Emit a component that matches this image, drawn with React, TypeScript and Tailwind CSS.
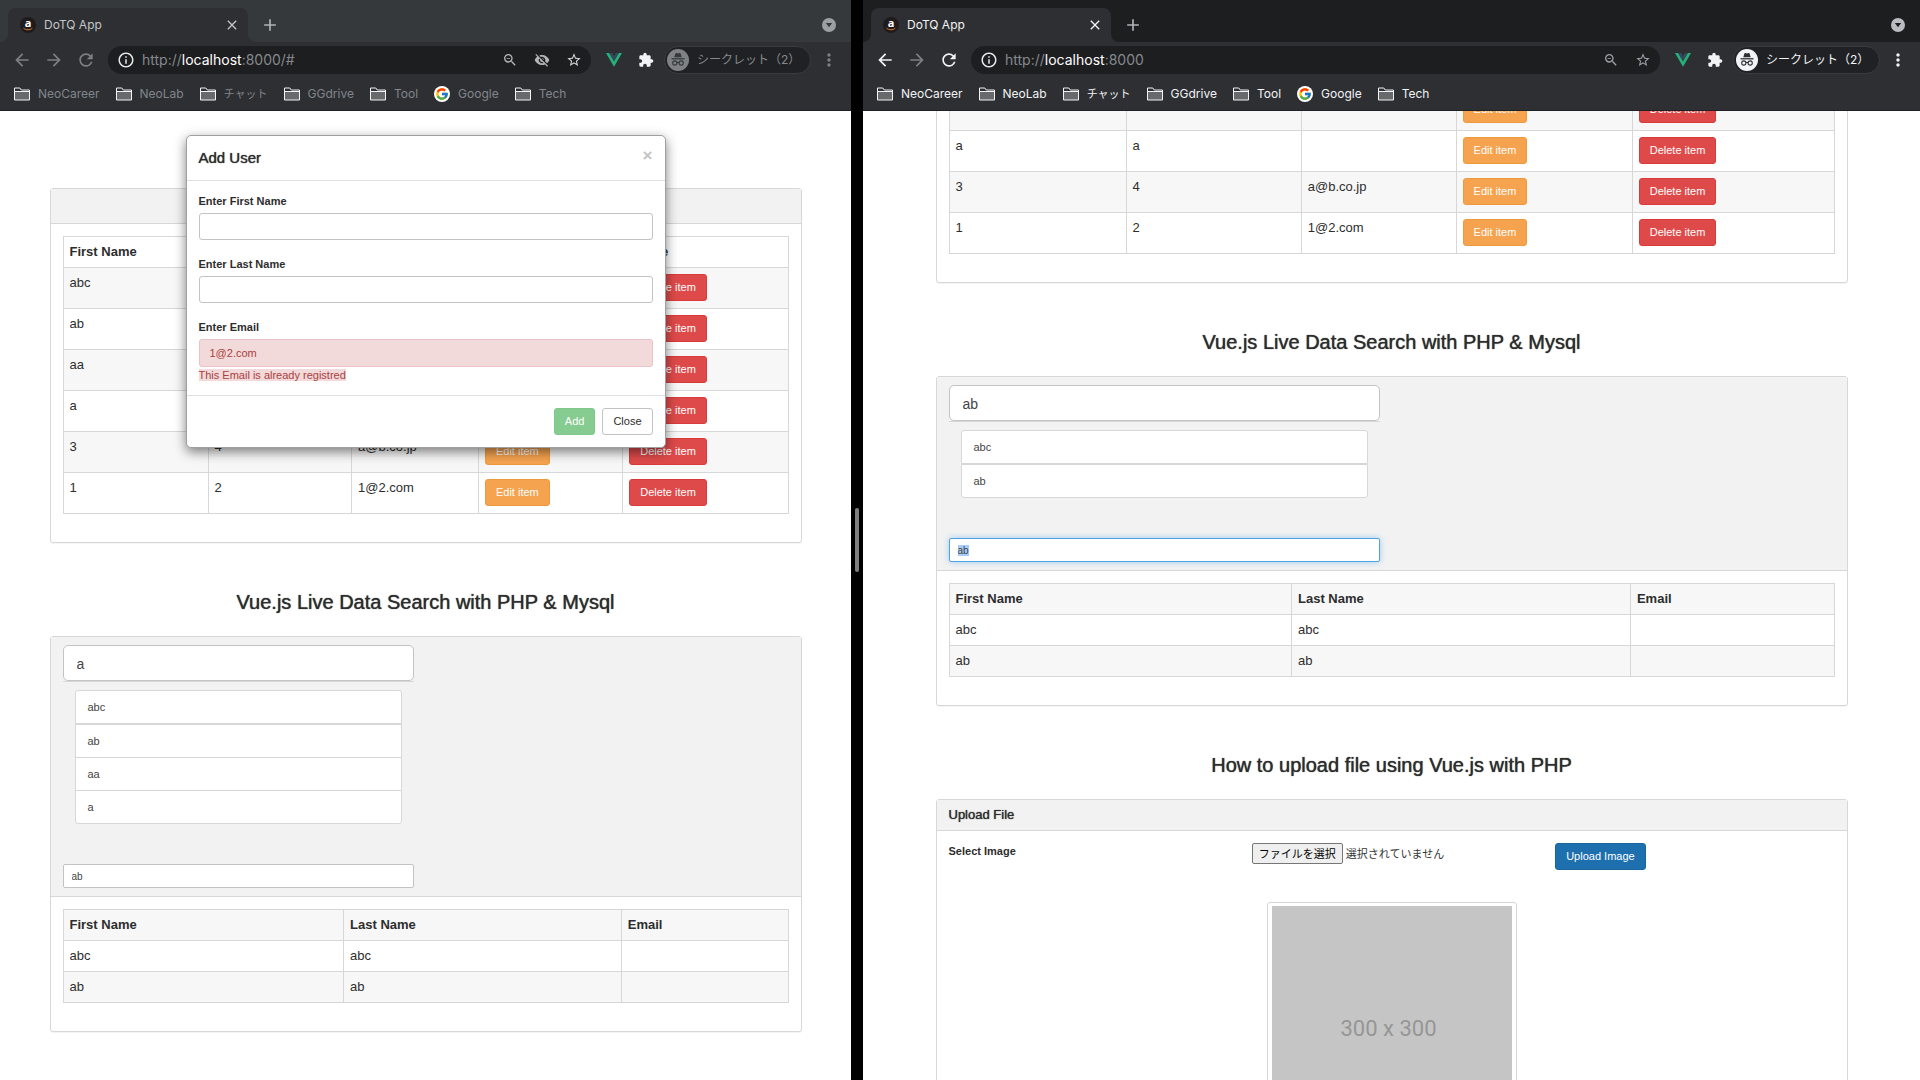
import { useLayoutEffect, useRef } from "react";
import type { ReactNode } from "react";
import {
  MdAdd,
  MdArrowBack,
  MdArrowForward,
  MdClose,
  MdExtension,
  MdInfoOutline,
  MdMoreVert,
  MdRefresh,
  MdStarBorder,
  MdVisibilityOff,
  MdZoomOut,
} from "react-icons/md";
import { FcGoogle } from "react-icons/fc";

type User = { first: string; last: string; email: string };

const users: User[] = [
  { first: "abc", last: "abc", email: "" },
  { first: "ab", last: "ab", email: "" },
  { first: "aa", last: "aa", email: "" },
  { first: "a", last: "a", email: "" },
  { first: "3", last: "4", email: "a@b.co.jp" },
  { first: "1", last: "2", email: "1@2.com" },
];

const searchResults = users.slice(0, 2);

/* ---------- Icons ---------- */

function Favicon() {
  return (
    <svg viewBox="0 0 16 16" className="size-4 shrink-0" aria-hidden="true">
      <circle cx="8" cy="8" r="8" fill="#1f1b1c" />
      <text x="8" y="10" textAnchor="middle" fontSize="11" fontWeight="700" fontFamily="Open Sans, sans-serif" fill="#fff">
        a
      </text>
      <path d="M3.8 11.4c2.4 1.9 5.900 1.900 8.200.1" fill="none" stroke="#d9792b" strokeWidth="1" strokeLinecap="round" />
    </svg>
  );
}

function FolderIcon() {
  return (
    <svg viewBox="0 0 16 14" className="h-[14px] w-4 shrink-0" aria-hidden="true">
      <path d="M1 4.500h14V13H1z" fill="#68696b" />
      <path d="M.5 13V1h5.300l1.500 2H15.500v10z" fill="none" stroke="#f1f3f4" />
      <path d="M.5 4.500h15" stroke="#f1f3f4" />
    </svg>
  );
}

function VueIcon() {
  return (
    <svg viewBox="0 0 16 14" className="h-[14px] w-4" aria-hidden="true">
      <path d="M0 0h3.200L8 8.300 12.800 0H16L8 13.800z" fill="#26b17b" />
      <path d="M3.200 0h2.900L8 3.300 9.900 0h2.900L8 8.300z" fill="#34495e" />
    </svg>
  );
}

function IncognitoIcon({ active }: { active: boolean }) {
  const ink = active ? "#2e2f33" : "#35383b";
  return (
    <svg viewBox="0 0 22 22" className="size-[22px] shrink-0" aria-hidden="true">
      <circle cx="11" cy="11" r="11" fill={active ? "#f1f3f4" : "#7f8285"} />
      <path d="M7.300 8.300 8.400 4.600c.2-.6.700-.7 1.200-.5l1.400.4 1.400-.4c.5-.2 1 0 1.200.5l1.100 3.700z" fill={ink} />
      <path d="M4.500 9.800h13" stroke={ink} strokeWidth="1.300" />
      <circle cx="7.800" cy="14" r="2.100" fill="none" stroke={ink} strokeWidth="1.100" />
      <circle cx="14.200" cy="14" r="2.100" fill="none" stroke={ink} strokeWidth="1.100" />
      <path d="M9.900 13.700c.7-.5 1.500-.5 2.200 0" fill="none" stroke={ink} strokeWidth="1.100" />
    </svg>
  );
}

function TabSearchIcon({ active }: { active: boolean }) {
  return (
    <svg viewBox="0 0 14 14" className="size-[14px]" aria-hidden="true">
      <circle cx="7" cy="7" r="7" fill={active ? "#b9bdc2" : "#9da0a3"} />
      <path d="M3.800 5h6.400L7 9.300z" fill={active ? "#1d1e20" : "#35393c"} />
    </svg>
  );
}

function TabFlare({ side }: { side: "left" | "right" }) {
  return (
    <svg
      viewBox="0 0 8 8"
      className={side === "left" ? "absolute bottom-0 right-full size-2" : "absolute bottom-0 left-full size-2"}
      aria-hidden="true"
    >
      <path d={side === "left" ? "M8 0v8H0a8 8 0 0 0 8-8z" : "M0 0v8h8a8 8 0 0 1-8-8z"} fill="#2e2f33" />
    </svg>
  );
}

/* ---------- Browser frame ---------- */

function Bookmark({ icon, children }: { icon: ReactNode; children: ReactNode }) {
  return (
    <a href="#bookmark" className="flex items-center gap-2 whitespace-nowrap">
      {icon}
      {children}
    </a>
  );
}

type BrowserProps = { active: boolean; path: string; blockedCookies?: boolean; children: ReactNode };

function BrowserWindow({ active, path, blockedCookies, children }: BrowserProps) {
  const strip = active ? "bg-[#1d1e20]" : "bg-[#35393c]";
  const title = active ? "text-[#f1f3f4]" : "text-[#c3c5c7]";
  const tool = active ? "text-[#f1f3f4]" : "text-[#7d8083]";
  const mark = active ? "text-[#f1f3f4]" : "text-[#80868b]";
  const hint = active ? "text-[#9aa0a6]" : "text-[#b4b6b8]";

  return (
    <section className="flex h-full min-w-0 flex-col overflow-hidden bg-white">
      <header className="shrink-0 border-b border-[#1f2023] bg-[#2e2f33] font-[Inter,'Noto_Sans_CJK_JP',sans-serif]">
        <div className={`flex h-[42px] items-end justify-between pl-2 pr-[15px] ${strip}`}>
          <div className="flex items-center">
            <div className={`relative flex h-[34px] w-60 items-center rounded-t-lg bg-[#2e2f33] pl-3 pr-2 text-xs ${title}`}>
              <TabFlare side="left" />
              <Favicon />
              <span className="ml-2 flex-1">DoTQ App</span>
              <button type="button" aria-label="Close tab">
                <MdClose className="size-4" />
              </button>
              <TabFlare side="right" />
            </div>
            <button type="button" aria-label="New tab" className="ml-3 text-[#b0b3b6]">
              <MdAdd className="size-5" />
            </button>
          </div>
          <button type="button" aria-label="Search tabs" className="mb-[10px]">
            <TabSearchIcon active={active} />
          </button>
        </div>

        <div className={`flex h-9 items-center pl-3 pr-3 ${tool}`}>
          <button type="button" aria-label="Back">
            <MdArrowBack className="size-5" />
          </button>
          <button type="button" aria-label="Forward" className="ml-3 text-[#7d8083]">
            <MdArrowForward className="size-5" />
          </button>
          <button type="button" aria-label="Reload" className="ml-3">
            <MdRefresh className="size-5" />
          </button>
          <div className="ml-3 flex h-7 min-w-0 flex-1 items-center rounded-full bg-[#1d1e20] px-[9px]">
            <MdInfoOutline className="size-[18px] shrink-0 text-[#e8eaed]" />
            <span className="ml-[7px] flex-1 truncate text-sm text-[#85898d]">
              http://<span className="text-white">localhost</span>
              {path}
            </span>
            <div className={`flex items-center gap-4 ${hint}`}>
              <button type="button" aria-label="Zoom out">
                <MdZoomOut className="size-4" />
              </button>
              {blockedCookies && (
                <button type="button" aria-label="Third-party cookies blocked">
                  <MdVisibilityOff className="size-4" />
                </button>
              )}
              <button type="button" aria-label="Bookmark this page" className={active ? "" : "text-[#d5d7d9]"}>
                <MdStarBorder className="size-4" />
              </button>
            </div>
          </div>
          <button type="button" aria-label="Vue devtools" className="ml-[15px]">
            <VueIcon />
          </button>
          <button type="button" aria-label="Extensions" className="ml-4 text-[#f1f3f4]">
            <MdExtension className="size-4" />
          </button>
          <button
            type="button"
            className={`ml-[10px] flex h-7 w-[147px] items-center gap-2 whitespace-nowrap rounded-full border border-[#3a3b3e] bg-[#202124] pl-[2px] text-xs ${active ? "text-[#f1f3f4]" : "text-[#85898d]"}`}
          >
            <IncognitoIcon active={active} />
            シークレット（2）
          </button>
          <button type="button" aria-label="Menu" className="ml-2">
            <MdMoreVert className="size-5" />
          </button>
        </div>

        <nav className={`flex h-8 items-center gap-4 pl-[14px] text-xs ${mark}`}>
          <Bookmark icon={<FolderIcon />}>NeoCareer</Bookmark>
          <Bookmark icon={<FolderIcon />}>NeoLab</Bookmark>
          <Bookmark icon={<FolderIcon />}>
            <span className="text-[11px]">チャット</span>
          </Bookmark>
          <Bookmark icon={<FolderIcon />}>GGdrive</Bookmark>
          <Bookmark icon={<FolderIcon />}>Tool</Bookmark>
          <Bookmark
            icon={
              <span className="flex size-4 items-center justify-center rounded-full bg-white">
                <FcGoogle className="size-[14px]" />
              </span>
            }
          >
            Google
          </Bookmark>
          <Bookmark icon={<FolderIcon />}>Tech</Bookmark>
        </nav>
      </header>
      {children}
    </section>
  );
}

/* ---------- Page content ---------- */

function Panel({ children }: { children: ReactNode }) {
  return <div className="rounded-[3px] border border-[#d7d7d7] bg-white shadow-[0_1px_1px_rgba(0,0,0,0.05)]">{children}</div>;
}

/* Liberation Sans has no medium cut; a tight shadow gives headings that weight. */
const medium = "[text-shadow:0_0_1px_#2d2d2d]";

function SectionHeading({ children }: { children: ReactNode }) {
  return <h3 className={`mb-[22px] mt-[47px] text-center text-xl leading-6 ${medium}`}>{children}</h3>;
}

const buttonBase = "h-[27px] rounded-[3px] border px-[10px] pb-px text-[11px] leading-4 whitespace-nowrap";
const cell = "border border-[#d7d7d7] p-[6px] text-left align-top";

function UserTable() {
  return (
    <table className="w-full table-fixed border-collapse text-[13px] leading-[18px]">
      <colgroup>
        <col className="w-[20%]" />
        <col className="w-[19.8%]" />
        <col className="w-[17.5%]" />
        <col className="w-[19.9%]" />
        <col />
      </colgroup>
      <thead>
        <tr>
          <th className={cell}>First Name</th>
          <th className={cell}>Last Name</th>
          <th className={cell}>Email</th>
          <th className={cell}>Edit</th>
          <th className={cell}>Delete</th>
        </tr>
      </thead>
      <tbody>
        {users.map((user) => (
          <tr key={user.first} className="h-[41px] odd:bg-[#f7f7f7]">
            <td className={cell}>{user.first}</td>
            <td className={cell}>{user.last}</td>
            <td className={cell}>{user.email}</td>
            <td className={cell}>
              <button type="button" className={`${buttonBase} block border-[#ef993e] bg-[#f5a34f] text-white`}>
                Edit item
              </button>
            </td>
            <td className={cell}>
              <button type="button" className={`${buttonBase} block border-[#d93a3a] bg-[#de4a4a] text-white`}>
                Delete item
              </button>
            </td>
          </tr>
        ))}
      </tbody>
    </table>
  );
}

function ResultTable() {
  return (
    <table className="w-full table-fixed border-collapse text-[13px] leading-[18px]">
      <colgroup>
        <col className="w-[38.7%]" />
        <col className="w-[38.3%]" />
        <col />
      </colgroup>
      <thead>
        <tr className="bg-[#f7f7f7]">
          <th className={cell}>First Name</th>
          <th className={cell}>Last Name</th>
          <th className={cell}>Email</th>
        </tr>
      </thead>
      <tbody>
        {searchResults.map((user) => (
          <tr key={user.first} className="even:bg-[#f7f7f7]">
            <td className={cell}>{user.first}</td>
            <td className={cell}>{user.last}</td>
            <td className={cell}>{user.email}</td>
          </tr>
        ))}
      </tbody>
    </table>
  );
}

const suggestion = "flex h-[34px] items-center border border-[#d7d7d7] bg-white px-3 text-[11px] text-[#444]";

type SearchProps = { query: string; suggestions: string[]; focused?: boolean };

function SearchPanel({ query, suggestions, focused }: SearchProps) {
  const filter = useRef<HTMLInputElement>(null);
  const [first, ...rest] = suggestions;

  useLayoutEffect(() => {
    if (focused && filter.current) {
      filter.current.focus({ preventScroll: true });
      filter.current.select();
    }
  }, [focused]);

  return (
    <Panel>
      <div className="border-b border-[#d7d7d7] bg-[#f2f2f2] px-3 py-2">
        <div className="grid grid-cols-2 gap-6">
          <div>
            <div className="border-b border-[#d7d7d7]">
              <input
                type="text"
                aria-label="Search users"
                defaultValue={query}
                className="block h-9 w-full rounded-[5px] border border-[#c3c3c3] bg-white px-[13px] pt-[2px] text-sm text-[#444] outline-none"
              />
            </div>
            <div className="px-3 pb-10 pt-2">
              <ul>
                <li className={`${suggestion} rounded-t-[3px]`}>{first}</li>
              </ul>
              <ul>
                {rest.map((name) => (
                  <li key={name} className={`${suggestion} not-first:-mt-px last:rounded-b-[3px]`}>
                    {name}
                  </li>
                ))}
              </ul>
            </div>
            <input
              ref={filter}
              type="text"
              aria-label="Filter results"
              defaultValue="ab"
              className="block h-6 w-full rounded-[2px] border border-[#c3c3c3] bg-white px-2 text-[10px] text-[#444] outline-none selection:bg-[#a5cdfb] selection:text-[#444] focus:border-[#4fa3e0] focus:shadow-[0_0_6px_rgba(102,175,233,0.6)]"
            />
          </div>
        </div>
      </div>
      <div className="px-3 pb-7 pt-3">
        <ResultTable />
      </div>
    </Panel>
  );
}

function UploadPanel({ id }: { id: string }) {
  return (
    <Panel>
      <h4 className={`flex h-[31px] items-center border-b border-[#d7d7d7] bg-[#f2f2f2] px-3 text-[13px] ${medium}`}>
        Upload File
      </h4>
      <div className="p-3">
        <div className="grid grid-cols-3 gap-6 text-[11px] leading-4">
          <label htmlFor={id} className="font-bold">
            Select Image
          </label>
          <div>
            <input id={id} type="file" className="sr-only" />
            <label htmlFor={id} className="flex items-center gap-[3px] text-black">
              <span className="flex h-[21px] items-center whitespace-nowrap rounded-[2px] border border-[#767676] bg-[#efefef] px-[6px]">
                ファイルを選択
              </span>
              <span className="whitespace-nowrap text-[#333]">選択されていません</span>
            </label>
          </div>
          <div>
            <button type="button" className={`${buttonBase} block border-[#1b659f] bg-[#1d6fae] text-white`}>
              Upload Image
            </button>
          </div>
        </div>
        <div className="mx-auto mt-8 w-[250px] rounded-[3px] border border-[#d7d7d7] bg-white px-1 py-[3px]">
          <div className="flex h-60 items-center justify-center bg-[#c5c5c5] pr-[6px] pt-1 font-[Roboto,sans-serif] text-[22px] text-[#969696]">
            300 x 300
          </div>
        </div>
      </div>
    </Panel>
  );
}

type AppPageProps = SearchProps & { id: string; container: string; scrollTop: number };

function AppPage({ id, container, scrollTop, ...search }: AppPageProps) {
  const view = useRef<HTMLElement>(null);

  useLayoutEffect(() => {
    if (view.current) view.current.scrollTop = scrollTop;
  }, [scrollTop]);

  return (
    <main ref={view} className="min-h-0 flex-1 overflow-y-auto text-[#2d2d2d] [scrollbar-width:none]">
      <div className={`mx-auto pb-12 pt-[77px] ${container}`}>
        <Panel>
          <div className="h-[35px] border-b border-[#d7d7d7] bg-[#f2f2f2]" />
          <div className="px-3 pb-7 pt-3">
            <UserTable />
          </div>
        </Panel>
        <SectionHeading>Vue.js Live Data Search with PHP &amp; Mysql</SectionHeading>
        <SearchPanel {...search} />
        <SectionHeading>How to upload file using Vue.js with PHP</SectionHeading>
        <UploadPanel id={id} />
      </div>
    </main>
  );
}

function AddUserDialog() {
  const label = "mb-1 block text-[11px] font-bold leading-4";
  const field = "block w-full rounded-[3px] border px-[10px] text-[11px] outline-none";
  return (
    <div className="absolute inset-x-0 top-6 flex justify-center text-[#2d2d2d]">
      <form
        role="dialog"
        aria-labelledby="dialog-title"
        className="w-[480px] rounded-[5px] border border-[#a0a0a0] bg-white shadow-[0_4px_12px_rgba(0,0,0,0.5)]"
      >
        <div className="flex h-[45px] items-center justify-between border-b border-[#e2e2e2] px-3">
          <h4 id="dialog-title" className={`text-[15px] ${medium}`}>
            Add User
          </h4>
          <button type="button" aria-label="Close dialog" className="mb-1 text-[17px] font-bold leading-5 text-[#c4c4c4]">
            ×
          </button>
        </div>
        <div className="flex flex-col gap-4 border-b border-[#e2e2e2] p-3">
          <div>
            <label htmlFor="first-name" className={label}>
              Enter First Name
            </label>
            <input id="first-name" type="text" className={`${field} h-[27px] border-[#c3c3c3]`} />
          </div>
          <div>
            <label htmlFor="last-name" className={label}>
              Enter Last Name
            </label>
            <input id="last-name" type="text" className={`${field} h-[27px] border-[#c3c3c3]`} />
          </div>
          <div>
            <label htmlFor="email" className={label}>
              Enter Email
            </label>
            <input
              id="email"
              type="text"
              defaultValue="1@2.com"
              className={`${field} h-7 border-[#e9c3c9] bg-[#f2d9da] text-[#a93f3f]`}
            />
            <p className="text-[11px] leading-4 text-[#a93f3f]">
              <span className="bg-[#f2d9da]">This Email is already registred</span>
            </p>
          </div>
        </div>
        <div className="flex justify-end gap-[7px] p-3">
          <button type="button" className={`${buttonBase} border-[#7ec88a] bg-[#86cb90] text-white`}>
            Add
          </button>
          <button type="button" className={`${buttonBase} border-[#c3c3c3] bg-white`}>
            Close
          </button>
        </div>
      </form>
    </div>
  );
}

export default function App() {
  return (
    <div className="grid h-screen grid-cols-[851fr_12px_1057fr] overflow-hidden bg-black font-['Liberation_Sans','Noto_Sans_CJK_JP',sans-serif]">
      <BrowserWindow active={false} path=":8000/#" blockedCookies>
        <div className="relative flex min-h-0 flex-1 flex-col">
          <AppPage
            id="upload-left"
            container="max-w-[752px]"
            scrollTop={0}
            query="a"
            suggestions={["abc", "ab", "aa", "a"]}
          />
          <AddUserDialog />
        </div>
      </BrowserWindow>
      <div className="flex items-center justify-center">
        <div className="h-16 w-1 rounded-full bg-[#808080]" />
      </div>
      <BrowserWindow active path=":8000">
        <AppPage
          id="upload-right"
          container="max-w-[912px]"
          scrollTop={260}
          query="ab"
          suggestions={["abc", "ab"]}
          focused
        />
      </BrowserWindow>
    </div>
  );
}
